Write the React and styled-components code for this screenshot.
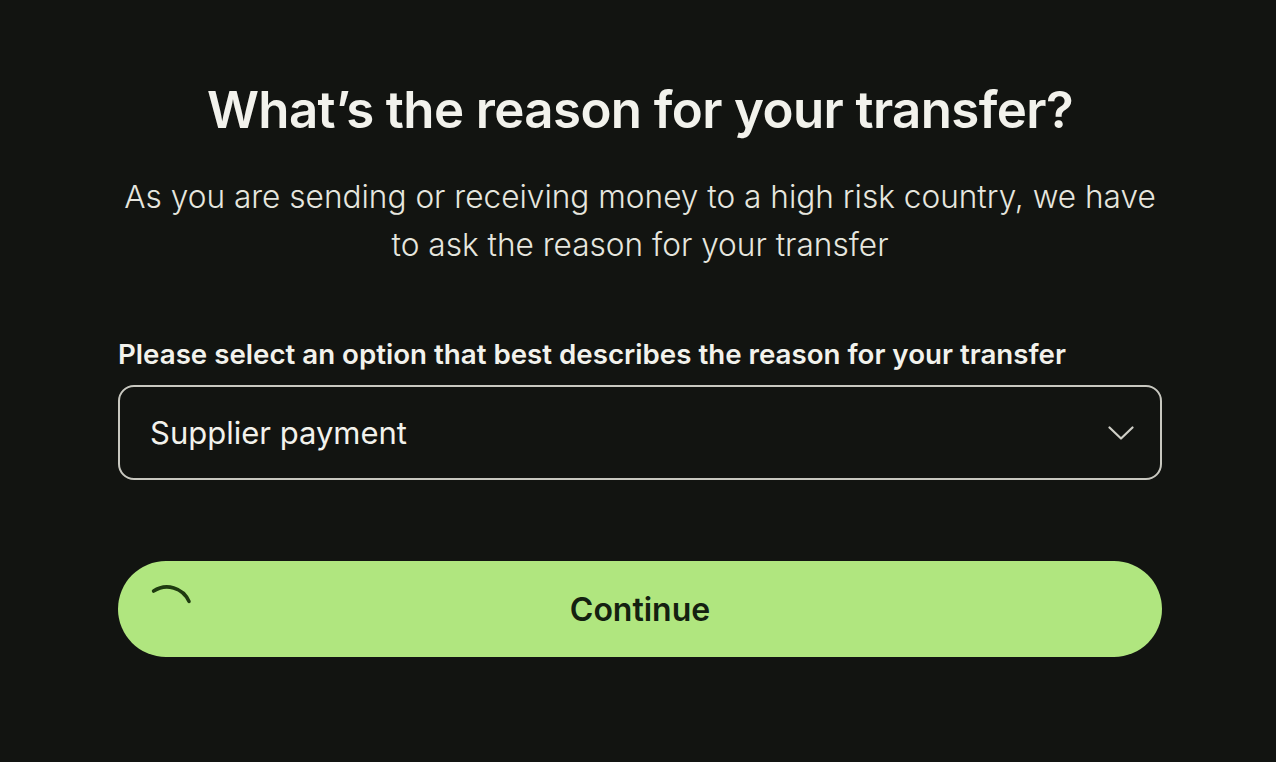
import React from 'react';
import styled, { createGlobalStyle } from 'styled-components';

const GlobalStyle = createGlobalStyle`
  html, body {
    margin: 0;
    padding: 0;
    background: #121411;
  }
  body {
    font-family: Inter, "Noto Sans", sans-serif;
    color: #f2f2ec;
  }
`;

const Page = styled.div`
  min-height: 762px;
  display: flex;
  justify-content: center;
  padding: 78px 0 0 4px;
  box-sizing: border-box;
`;

const Form = styled.div`
  width: 1044px;
  display: flex;
  flex-direction: column;
`;

const Title = styled.h1`
  margin: 0;
  text-align: center;
  font-size: 51px;
  line-height: 64px;
  font-weight: 600;
  letter-spacing: -0.6px;
  color: #f2f2ec;
`;

const Subtitle = styled.p`
  margin: 31px 0 0;
  text-align: center;
  font-size: 31.6px;
  line-height: 48px;
  font-weight: 300;
  color: #e6e6df;
`;

const Label = styled.label`
  margin-top: 68px;
  font-size: 27.7px;
  line-height: 34px;
  font-weight: 600;
  color: #f2f2ec;
`;

const SelectBox = styled.div`
  margin-top: 14px;
  height: 95px;
  box-sizing: border-box;
  border: 2px solid #c8c8c0;
  border-radius: 16px;
  display: flex;
  align-items: center;
  justify-content: space-between;
  padding: 0 26px 0 30px;
  font-size: 31px;
  font-weight: 400;
  color: #f2f2ec;
`;

const Chevron = styled.svg`
  flex-shrink: 0;
`;

const Button = styled.button`
  position: relative;
  margin-top: 81px;
  height: 96px;
  border: none;
  border-radius: 48px;
  background: #b0e67f;
  color: #142110;
  font-family: Inter, "Noto Sans", sans-serif;
  font-size: 32px;
  font-weight: 600;
  display: flex;
  align-items: center;
  justify-content: center;
  cursor: pointer;
`;

const Spinner = styled.svg`
  position: absolute;
  left: 19px;
  top: 20px;
`;

export default function App() {
  return (
    <>
      <GlobalStyle />
      <Page>
        <Form>
          <Title>What’s the reason for your transfer?</Title>
          <Subtitle>
            As you are sending or receiving money to a high risk country, we have
            <br />
            to ask the reason for your transfer
          </Subtitle>
          <Label>Please select an option that best describes the reason for your transfer</Label>
          <SelectBox>
            <span>Supplier payment</span>
            <Chevron width="26" height="14" viewBox="0 0 26 14" fill="none" stroke="#cfcfc7" strokeWidth="2.2" strokeLinecap="round" strokeLinejoin="round">
              <path d="M1.5 1.5 L13 12.5 L24.5 1.5" />
            </Chevron>
          </SelectBox>
          <Button>
            <Spinner width="60" height="60" viewBox="0 0 60 60">
              <path d="M16.6 10.1 A24 24 0 0 1 52 20.4" fill="none" stroke="#1f3b10" strokeWidth="3.6" strokeLinecap="round" />
            </Spinner>
            Continue
          </Button>
        </Form>
      </Page>
    </>
  );
}
